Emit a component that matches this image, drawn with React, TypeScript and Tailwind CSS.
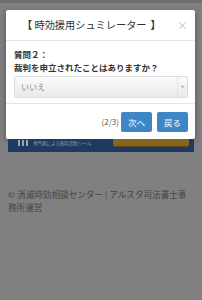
export default function App() {
  return (
    <div className="h-[300px] w-[202px] overflow-hidden bg-[#808080] font-['Noto_Sans_CJK_JP',sans-serif]">
      {/* status strip */}
      <div className="h-[3px] bg-[#6e6e6e]" />

      {/* Modal */}
      <div className="ml-[6px] mt-[7px] w-[189px] rounded-[2px] bg-white shadow-[0_2px_6px_rgba(0,0,0,0.35)]">
        {/* Header */}
        <div className="flex h-[31px] items-center justify-between border-b border-[#e5e5e5] pl-[16px] pr-[7px]">
          <span className="whitespace-nowrap text-[10.2px] leading-none text-[#333]">
            <span className="font-bold">【</span> 時効援用シュミレーター
            <span className="ml-[4px] font-bold">】</span>
          </span>
          <span className="text-[11px] leading-none text-[#c4c4c4]">×</span>
        </div>

        {/* Body */}
        <div className="px-[8px] pb-[5px] pt-[7px] pr-[7px]">
          <p className="text-[8.5px] font-bold leading-[13px] text-[#333]">質問２：</p>
          <p className="text-[8.5px] font-bold leading-[13px] text-[#333]">
            裁判を申立されたことはありますか？
          </p>
          <div className="mt-[2px] flex h-[22px] items-stretch rounded-[2px] border border-[#dcdcdc] bg-gradient-to-b from-[#fbfbfb] to-[#e9e9e9]">
            <span className="flex flex-1 items-center pl-[6px] text-[8px] text-[#8a8a8a]">
              いいえ
            </span>
            <span className="flex w-[10px] items-center justify-center border-l border-[#e3e3e3] text-[4px] text-[#bbb]">
              ▼
            </span>
          </div>
        </div>

        {/* Footer */}
        <div className="flex items-center justify-end gap-[5px] border-t border-[#e5e5e5] pb-[7px] pr-[7px] pt-[8px]">
          <span className="mr-[-3px] text-[8px] text-[#555]">(2/3)</span>
          <button className="h-[20px] w-[31px] rounded-[2px] bg-[#3d87c6] text-[8.5px] text-white">
            次へ
          </button>
          <button className="h-[20px] w-[31px] rounded-[2px] bg-[#3d87c6] text-[8.5px] text-white">
            戻る
          </button>
        </div>
      </div>

      {/* Banner behind overlay */}
      <div className="mx-[8px] flex h-[13px] items-start gap-[5px] bg-[#1e3a60] pl-[10px] pr-[5px]">
        <div className="flex gap-[2px] pt-[1px]">
          <span className="h-[6px] w-[2px] bg-[#9aa7b8]" />
          <span className="h-[6px] w-[2px] bg-[#9aa7b8]" />
          <span className="h-[6px] w-[2px] bg-[#9aa7b8]" />
        </div>
        <span className="text-[4.5px] leading-[8px] text-[#8d9ab0]">専門家による無料診断ツール</span>
        <div className="ml-auto h-[8px] w-[76px] rounded-b-[2px] border-b border-[#5a4515] bg-[#86661e]" />
      </div>

      {/* Page footer */}
      <p className="mt-[36px] px-[8px] text-[8.6px] leading-[13px] text-[#454545]">
        © 消滅時効相談センター | アルスタ司法書士事務所運営
      </p>
    </div>
  );
}
